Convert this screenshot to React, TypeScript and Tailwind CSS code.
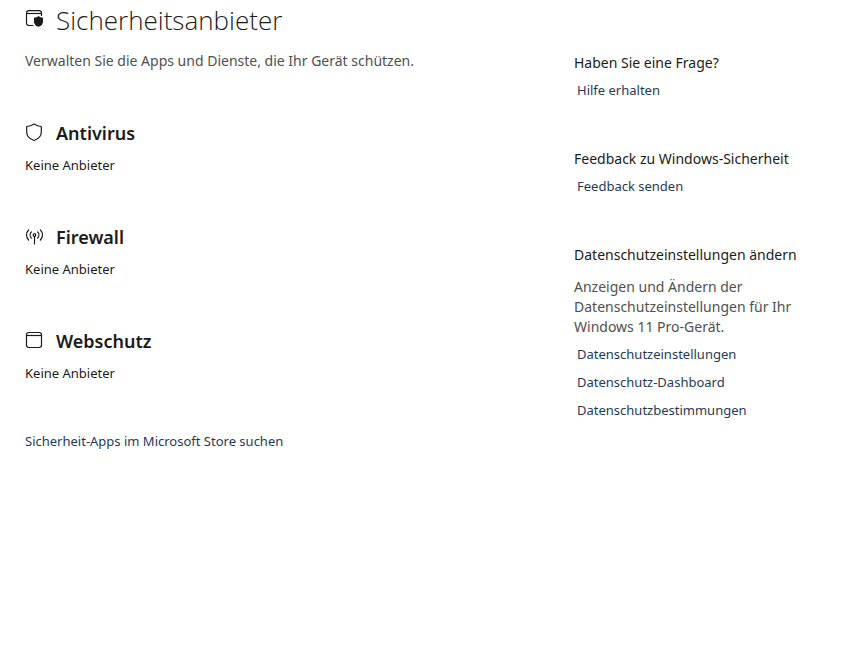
import React from 'react';

interface IconProps {
  className?: string;
}

const AppShieldIcon: React.FC<IconProps> = ({ className }) => (
  <svg viewBox="0 0 20 20" fill="none" stroke="currentColor" strokeWidth="1.2" className={className} aria-hidden="true">
    <path d="M8.5 15.500H4A2.500 2.500 0 0 1 1.500 13V3A2.500 2.500 0 0 1 4 .7h10A2.500 2.500 0 0 1 16.500 3v3" />
    <path d="M1.500 3.500h15" />
    <path
      d="M13.500 6c1.200 1 2.400 1.500 3.700 1.600.5 0 .8.3.8.7v3.200c0 2.500-1.500 4.300-4.200 5.300a.9.9 0 0 1-.6 0C10.500 15.800 9 14 9 11.500V8.300c0-.4.3-.7.800-.7C11.100 7.500 12.300 7 13.500 6z"
      fill="currentColor"
      stroke="none"
    />
  </svg>
);

const ShieldIcon: React.FC<IconProps> = ({ className }) => (
  <svg viewBox="0 0 20 20" fill="none" stroke="currentColor" strokeWidth="1.2" strokeLinejoin="round" className={className} aria-hidden="true">
    <path d="M9 1c2.200 1.500 4.500 2.300 7.300 2.500V9c0 4-2.500 6.800-7.300 8.500C4.200 15.800 1.700 13 1.700 9V3.500C4.500 3.300 6.800 2.500 9 1z" />
  </svg>
);

const AntennaIcon: React.FC<IconProps> = ({ className }) => (
  <svg viewBox="0 0 20 20" fill="none" stroke="currentColor" strokeWidth="1.2" strokeLinecap="round" className={className} aria-hidden="true">
    <path d="M3.600 3a7 7 0 0 0 0 10M15.400 3a7 7 0 0 1 0 10" />
    <path d="M6.300 5a4.300 4.300 0 0 0 0 6M12.700 5a4.300 4.300 0 0 1 0 6" />
    <circle cx="9.500" cy="8" r="1.300" />
    <path d="M9.500 9.500V17" />
  </svg>
);

const WindowIcon: React.FC<IconProps> = ({ className }) => (
  <svg viewBox="0 0 20 20" fill="none" stroke="currentColor" strokeWidth="1.2" className={className} aria-hidden="true">
    <rect x="1.500" y="1.500" width="15" height="15" rx="2.400" />
    <path d="M1.500 4.500h15" />
  </svg>
);

const providers = [
  { title: 'Antivirus', Icon: ShieldIcon },
  { title: 'Firewall', Icon: AntennaIcon },
  { title: 'Webschutz', Icon: WindowIcon },
];

const helpSections = [
  { title: 'Haben Sie eine Frage?', links: ['Hilfe erhalten'] },
  { title: 'Feedback zu Windows-Sicherheit', links: ['Feedback senden'] },
  {
    title: 'Datenschutzeinstellungen ändern',
    text: 'Anzeigen und Ändern der Datenschutzeinstellungen für Ihr Windows 11 Pro-Gerät.',
    links: ['Datenschutzeinstellungen', 'Datenschutz-Dashboard', 'Datenschutzbestimmungen'],
  },
];

const TextLink = ({ label }: { label: string }) => (
  <a href="#" className="text-[13px] leading-5 text-[#1f3a57] hover:underline">
    {label}
  </a>
);

const App: React.FC = () => (
  <div className="flex min-h-screen bg-white pl-[25px] font-['Noto_Sans',sans-serif] text-[#1b1b1b]">
    <main className="min-w-0 flex-1">
      <header>
        <div className="flex h-10 items-center gap-[11px]">
          <AppShieldIcon className="size-5 shrink-0" />
          <h1 className="font-['Open_Sans',sans-serif] text-[26px] leading-10 font-light">Sicherheitsanbieter</h1>
        </div>
        <p className="mt-[11px] text-sm leading-5 text-[#505050]">
          Verwalten Sie die Apps und Dienste, die Ihr Gerät schützen.
        </p>
      </header>

      <div className="mt-12 flex flex-col gap-12">
        {providers.map(({ title, Icon }) => (
          <section key={title}>
            <div className="flex items-center gap-[11px]">
              <Icon className="size-5 shrink-0" />
              <h2 className="text-lg leading-7 font-semibold">{title}</h2>
            </div>
            <p className="mt-2 text-[13px] leading-5">Keine Anbieter</p>
          </section>
        ))}
      </div>

      <div className="mt-12 flex">
        <TextLink label="Sicherheit-Apps im Microsoft Store suchen" />
      </div>
    </main>

    <aside className="flex w-[267px] shrink-0 flex-col gap-[49px] pt-[53px] pr-8">
      {helpSections.map(({ title, text, links }) => (
        <section key={title}>
          <h3 className="text-sm leading-5 whitespace-nowrap">{title}</h3>
          {text && <p className="mt-3 text-sm leading-5 text-[#505050]">{text}</p>}
          <div className="mt-[7px] flex flex-col items-start gap-2 pl-[3px]">
            {links.map((label) => (
              <TextLink key={label} label={label} />
            ))}
          </div>
        </section>
      ))}
    </aside>
  </div>
);

export default App;
